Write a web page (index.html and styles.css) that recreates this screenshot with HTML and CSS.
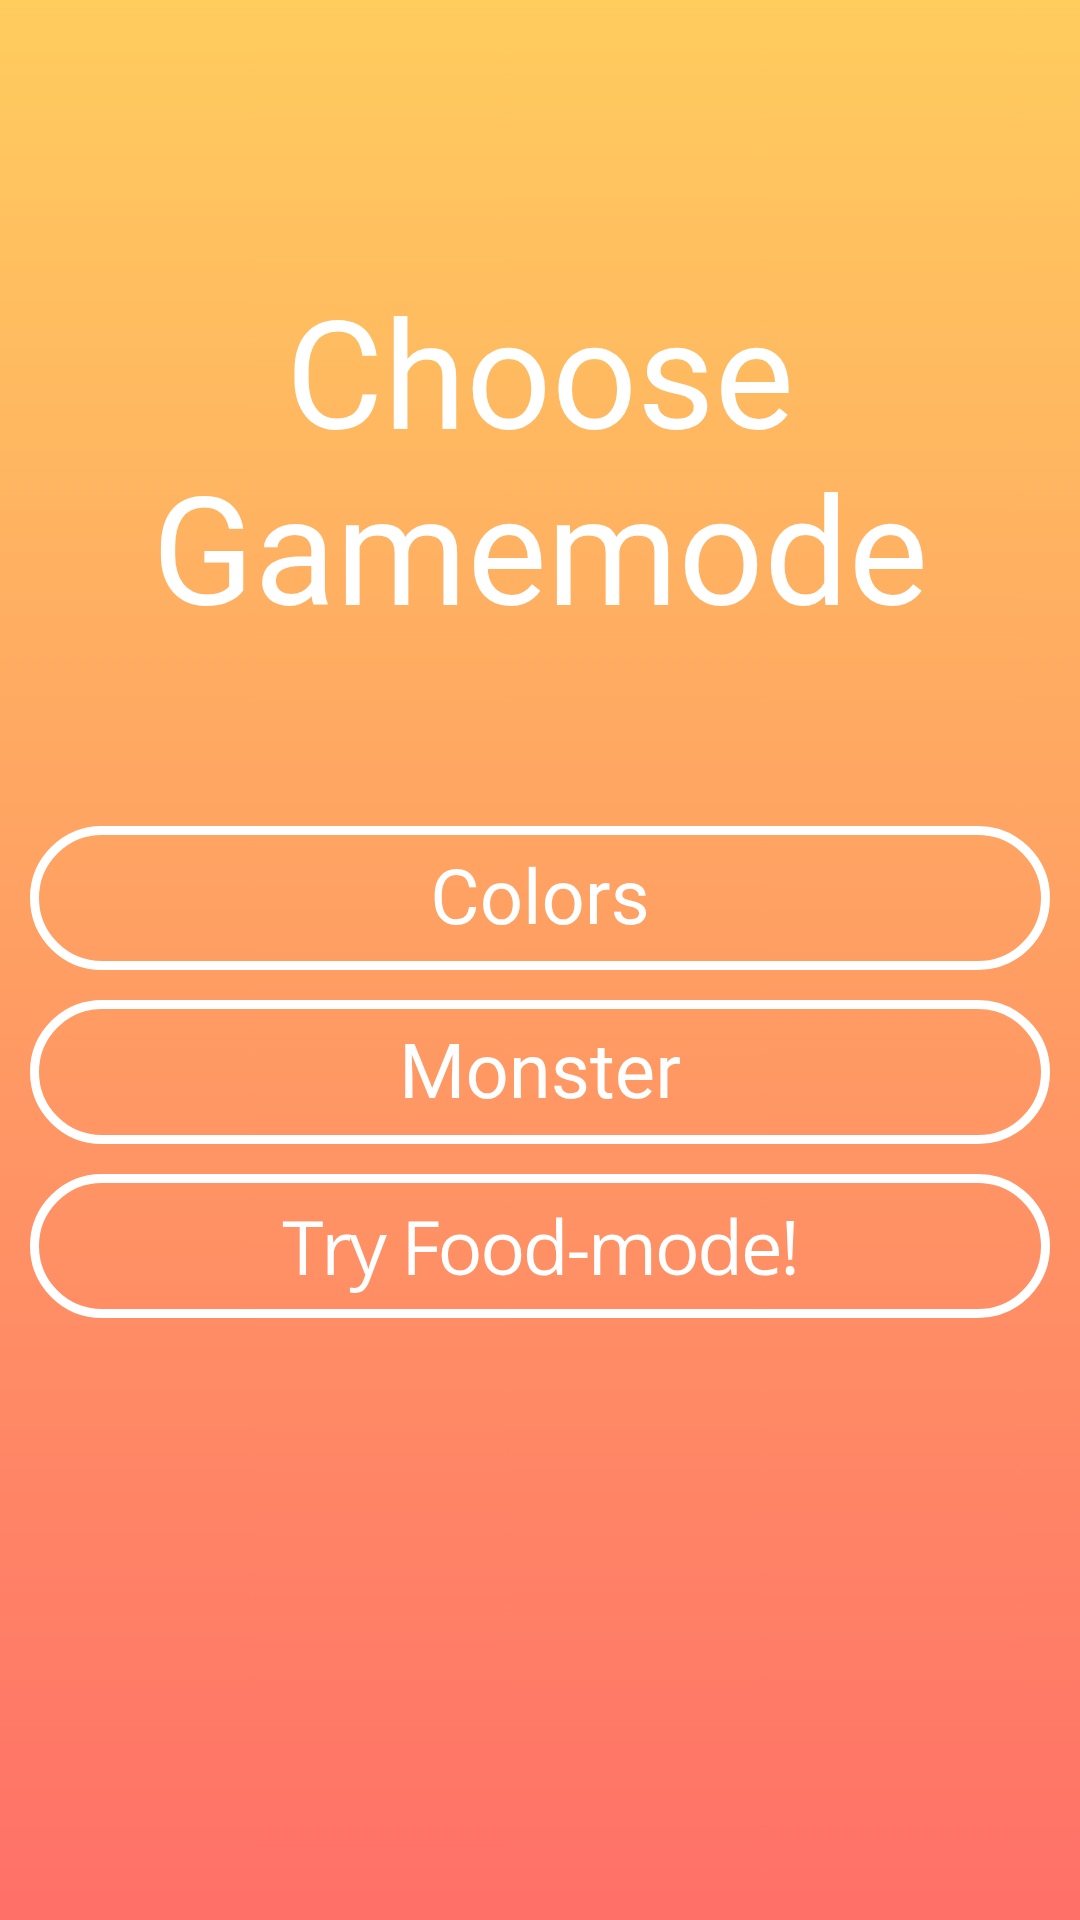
FILE: index.html
```html
<!DOCTYPE html>
<html lang="en">
<head>
<meta charset="utf-8">
<title>Choose Gamemode</title>
<link rel="stylesheet" href="styles.css">
</head>
<body>
<main class="screen">
  <h1 class="title">Choose<br>Gamemode</h1>
  <nav class="modes">
    <button class="mode-btn">Colors</button>
    <button class="mode-btn">Monster</button>
    <button class="mode-btn mode-btn--food">Try Food-mode!</button>
  </nav>
</main>
</body>
</html>
```
FILE: styles.css
```css
html, body {
  margin: 0;
  padding: 0;
}

.screen {
  box-sizing: border-box;
  width: 1080px;
  height: 1920px;
  padding-top: 290px;
  background: linear-gradient(180deg, #ffcc5e 0%, #ff7068 100%);
  font-family: Roboto, "Liberation Sans", sans-serif;
  color: #ffffff;
}

.title {
  margin: 0;
  font-family: Roboto, sans-serif;
  font-weight: 400;
  font-size: 150px;
  line-height: 176px;
  text-align: center;
}

.modes {
  margin-top: 184px;
  padding: 0 30px;
  display: flex;
  flex-direction: column;
  gap: 30px;
}

.mode-btn {
  box-sizing: border-box;
  height: 144px;
  border: 9px solid #ffffff;
  border-radius: 72px;
  background: transparent;
  color: #ffffff;
  font-family: Roboto, sans-serif;
  font-size: 76px;
  font-weight: 400;
  display: flex;
  align-items: center;
  justify-content: center;
  padding: 0;
}

.mode-btn--food {
  font-family: "Open Sans", sans-serif;
  font-size: 75px;
  letter-spacing: -2.5px;
}
```
